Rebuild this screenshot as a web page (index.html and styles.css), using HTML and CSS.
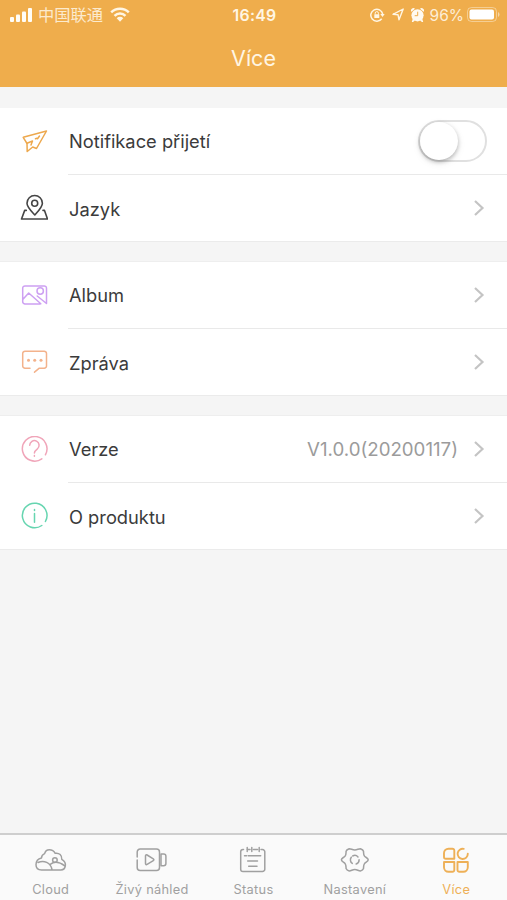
FILE: index.html
```html
<!DOCTYPE html>
<html lang="cs">
<head>
<meta charset="utf-8">
<meta name="viewport" content="width=device-width, initial-scale=1">
<title>Více</title>
<link rel="stylesheet" href="styles.css">
</head>
<body>
<div class="screen">
  <header class="header">
    <div class="status">
      <div class="status-left">
        <svg class="signal" width="23" height="14" viewBox="0 0 23 14"><rect x="0" y="9" width="4" height="5" rx="1"/><rect x="6" y="6.5" width="4" height="7.5" rx="1"/><rect x="12" y="3.5" width="4" height="10.500" rx="1"/><rect x="18" y="0" width="4" height="14" rx="1"/></svg>
        <span class="carrier" lang="zh">中国联通</span>
        <svg class="wifi" width="20" height="15" viewBox="0 0 20 15"><path d="M1.200 5.300a12.500 12.500 0 0 1 17.600 0M4.500 8.800a7.800 7.800 0 0 1 11 0" fill="none" stroke="currentColor" stroke-width="2.500"/><path d="M6.700 11.200a4.700 4.700 0 0 1 6.600 0L10 14.700z"/></svg>
      </div>
      <time class="clock">16:49</time>
      <div class="status-right">
        <svg class="lock" width="15" height="14" viewBox="0 0 15 14" fill="none" stroke="currentColor"><path d="M11.700 10.700A6 6 0 1 1 12.700 6" stroke-width="1.500"/><path d="M10.300 6h4.400l-2.200 3z" fill="currentColor" stroke="none"/><path d="M5.200 6.500V5.200a1.600 1.600 0 0 1 3.200 0v1.300"/><rect x="4.300" y="6.200" width="5" height="3.800" rx=".5" fill="currentColor" stroke="none"/></svg>
        <svg class="arrow" width="12" height="13" viewBox="0 0 12 13"><path d="M1 6.300 11.200 1 7 11.800 6 6.700z" fill="none" stroke="currentColor" stroke-width="1.400" stroke-linejoin="round"/></svg>
        <svg class="alarm" width="13" height="14" viewBox="0 0 13 14"><circle cx="6.500" cy="7.300" r="6.100"/><path d="M.4 3.800A2.400 2.400 0 0 1 4 .7zM9 .7a2.400 2.400 0 0 1 3.600 3.100zM1.800 10.500 4 12.500 2 14H.8zM11.200 10.500 9 12.500l2 1.500h1.200z"/><path d="M6.700 3.700v4H3.700" fill="none" stroke="#efad4c" stroke-width="1"/></svg>
        <span class="percent">96%</span>
        <svg class="battery" width="33" height="15" viewBox="0 0 33 15"><rect x=".5" y=".5" width="29" height="14" rx="4" fill="none" stroke="currentColor" opacity=".4"/><rect x="2.500" y="2.500" width="24.500" height="10" rx="2"/><path d="M31 5v5q1.500-.7 1.500-2.500T31 5z" opacity=".5"/></svg>
      </div>
    </div>
    <h1 class="title">Více</h1>
  </header>

  <main class="groups">
    <section class="group">
      <div class="row">
        <svg class="icon notify" viewBox="0 0 28 28"><path d="M7 15.500 3.200 9.300 26.500 3 16.500 20.500 12.700 19 7.200 23.500z"/><path d="M7 15.200 12.500 13 11 17M15.500 10.700l1.500-.5M19.500 8 17.500 10.700"/></svg>
        <div class="cell"><span class="label">Notifikace přijetí</span><button class="switch" role="switch" aria-checked="false" aria-label="Notifikace přijetí"><span class="knob"></span></button></div>
      </div>
      <div class="row">
        <svg class="icon language" viewBox="0 0 28 28"><path d="M14.800 21C10.500 16.200 7 12.900 7 9.200a7.700 7.700 0 0 1 15.400 0c0 3.700-3.300 7-7.600 11.800z"/><circle cx="14.700" cy="9.300" r="3"/><path d="M6.300 16.400H4.700L1.500 25h26L24.500 16.400H23"/></svg>
        <div class="cell"><span class="label">Jazyk</span><svg class="chevron" viewBox="0 0 12 18"><path d="m2 2 7.500 7L2 16"/></svg></div>
      </div>
    </section>

    <section class="group">
      <div class="row">
        <svg class="icon album" viewBox="0 0 28 28"><path d="M20 22H5a2.300 2.300 0 0 1-2.300-2.300V6.200A2.300 2.300 0 0 1 5 3.900h19.200a2.300 2.300 0 0 1 2.300 2.300V21.500L17.200 14M3 17.300 8.700 11 20.800 21.700"/><circle cx="20.200" cy="9" r="3.200"/></svg>
        <div class="cell"><span class="label">Album</span><svg class="chevron" viewBox="0 0 12 18"><path d="m2 2 7.500 7L2 16"/></svg></div>
      </div>
      <div class="row">
        <svg class="icon message" viewBox="0 0 28 28"><path d="M10 20.200H5a2.300 2.300 0 0 1-2.300-2.300V5.500A2.300 2.300 0 0 1 5 3.200h19.200a2.300 2.300 0 0 1 2.300 2.300v12.400a2.300 2.300 0 0 1-2.300 2.300h-4.900l-4.800 4"/><g fill="currentColor" stroke="none"><circle cx="8.500" cy="12.300" r="1.500"/><circle cx="14.700" cy="12.300" r="1.500"/><circle cx="21" cy="12.300" r="1.500"/></g></svg>
        <div class="cell"><span class="label">Zpráva</span><svg class="chevron" viewBox="0 0 12 18"><path d="m2 2 7.500 7L2 16"/></svg></div>
      </div>
    </section>

    <section class="group">
      <div class="row">
        <svg class="icon version" viewBox="0 0 28 28"><path d="M21.800 22.800A12.300 12.300 0 1 1 25.400 18.800"/><path d="M9.700 9.300a4.700 4.700 0 1 1 7.500 3.800c-2.100 1.500-2.800 2-2.800 4M14.400 19.500v.8"/></svg>
        <div class="cell"><span class="label">Verze</span><span class="value">V1.0.0(20200117)</span><svg class="chevron" viewBox="0 0 12 18"><path d="m2 2 7.500 7L2 16"/></svg></div>
      </div>
      <div class="row">
        <svg class="icon about" viewBox="0 0 28 28"><path d="M21.800 23.500A12.300 12.300 0 1 1 25.400 19.500M14.500 11.500v8.800M14.500 7.500v1"/></svg>
        <div class="cell"><span class="label">O produktu</span><svg class="chevron" viewBox="0 0 12 18"><path d="m2 2 7.500 7L2 16"/></svg></div>
      </div>
    </section>
  </main>

  <nav class="tabs">
    <a class="tab cloud"><svg viewBox="0 0 32 28"><path d="M6.500 11.900C6.500 9.500 8 8.300 9.600 7.600 10.300 5 12 3.700 14.300 3.700c3 0 4.700 1.300 5.900 3.600 4.200-.6 6.800 1.900 6.600 6.100 3 1.800 4 4 3.500 6.600-.5 2.500-2 3.900-4.300 3.900H6.500C3 23.900 1 21.800 1 18.700c0-3.700 2-6 5.500-6.800M3 16.500c6-2.500 12.500 0 14 7M15.200 18.300c4-3 9.500-2.300 14.500 1.500"/><circle cx="19.900" cy="14" r="2.300"/></svg><span>Cloud</span></a>
    <a class="tab live"><svg viewBox="0 0 32 28"><path d="M1.200 11V6a3 3 0 0 1 3-3h16.300a3 3 0 0 1 3 3v15.500a3 3 0 0 1-3 3H4.200a3 3 0 0 1-3-3V14"/><path d="M9.500 10v7.500c0 1 .8 1.400 1.600.9l6.200-3.700c.8-.5.800-1.300 0-1.800L11.100 9c-.8-.5-1.600 0-1.600 1zM25 8h2.700a2.200 2.200 0 0 1 2.200 2.200v7.300a2.200 2.200 0 0 1-2.200 2.200H25V8"/></svg><span>Živý náhled</span></a>
    <a class="tab stat"><svg viewBox="0 0 32 28"><path d="M6.500 3.500H6A2.300 2.300 0 0 0 3.700 5.800v17.400A2.300 2.300 0 0 0 6 25.500h19.500a2.300 2.300 0 0 0 2.300-2.300V5.800a2.300 2.300 0 0 0-2.300-2.300H24M10 3.500h3M16.500 3.500h4M10.200 1.500v4M14.800 1.500v4M22.200 1.500v4M7.500 9.700h2M11.200 9.700h12.500M10.700 15h9.800M11.700 20.200h8.300"/></svg><span>Status</span></a>
    <a class="tab settings"><svg viewBox="0 0 32 28"><path d="M10.200 2.700c2.200 0 2.900 1.300 5.600 1.300s3.400-1.300 5.600-1.300c1.600.6 2.800 1.300 3.100 2.500.2 2-.2 3.200 1 4.900 1.100 1.500 3.700 1.800 3.700 3.700s-2.600 2.300-3.700 3.800c-1.200 1.700-.8 3-1 5-.4 1.200-1.600 2-3.100 2.300-2.200 0-3-1.500-5.600-1.500s-3.400 1.500-5.600 1.500c-1.500-.3-2.700-1.100-3.100-2.300-.2-2 .2-3.300-1-5-1.100-1.500-3.700-1.900-3.700-3.800s2.600-2.200 3.700-3.700c1.200-1.700.8-2.900 1-4.900.3-1.200 1.500-1.900 3.100-2.500z"/><path d="M12.300 11.200a4.300 4.300 0 0 0 1 6.200M17.200 18a4.300 4.300 0 0 0 2.900-4.200M19 10.900a4.300 4.300 0 0 0-5.300-.9"/></svg><span>Nastavení</span></a>
    <a class="tab more active"><svg viewBox="0 0 32 28"><path d="M8.500 2.700h4a1.800 1.800 0 0 1 1.800 1.800v8.300H5.800A1.800 1.800 0 0 1 4 11V7.200a4.500 4.500 0 0 1 4.500-4.500zM4 16h10.300v8a1.800 1.800 0 0 1-1.800 1.800h-4A4.500 4.500 0 0 1 4 21.300zM17.500 16h10.300v5.300a4.500 4.500 0 0 1-4.500 4.500h-4a1.800 1.800 0 0 1-1.800-1.800zM27.800 7.800a5.100 5.100 0 1 1-4-4.900"/></svg><span>Více</span></a>
  </nav>
</div>
</body>
</html>
```
FILE: styles.css
```css
* { box-sizing: border-box; }
body {
  margin: 0;
  background: #f5f5f5;
  color: #3b3b3b;
  font-family: Inter, "Noto Sans CJK SC", sans-serif;
}
.screen { display: flex; flex-direction: column; height: 900px; }
.header { height: 87px; background: #efad4c; color: #fff6e4; }
.status {
  display: grid;
  grid-template-columns: 1fr auto 1fr;
  align-items: center;
  height: 29px;
  padding: 0 8px 0 10px;
}
.status svg { fill: currentColor; }
.status-left, .status-right { display: flex; align-items: center; }
.status-right { justify-content: flex-end; }
.status .lock, .status .arrow { fill: none; }
.signal { color: #fffdf7; }
.carrier { margin: 0 7px 0 5px; font-size: 16.300px; line-height: 20px; font-weight: 400; opacity: .85; }
.clock { padding-top: 1px; font-size: 15.800px; font-weight: 600; letter-spacing: .3px; }
.arrow { margin-left: 7px; }
.alarm { margin-left: 7px; color: #fffaf0; }
.percent { margin: 1px 3px 0 6px; font-size: 15.500px; opacity: .9; }
.battery { margin-right: -1px; color: #fff; }
.title { margin: 14px 0 0; font-size: 21.500px; line-height: 30px; font-weight: 400; text-align: center; }

.groups { flex: 1; padding-top: 21px; }
.group { height: 134px; margin-bottom: 20px; border-bottom: 1px solid #ebebeb; background: #fff; }
.group + .group { border-top: 1px solid #eeeeee; margin-top: -1px; height: 135px; }
.row { display: flex; align-items: center; height: 67px; padding-left: 20px; }
.row + .row { height: 66px; }
.icon { width: 28px; height: 28px; margin-right: 20px; flex: none; }
.icon, .chevron, .tab svg { fill: none; stroke: currentColor; stroke-width: 1.500; stroke-linecap: round; stroke-linejoin: round; }
.cell { display: flex; align-items: center; flex: 1; height: 100%; padding-right: 22px; padding-left: 1px; }
.row:first-child .cell { padding-right: 20px; border-bottom: 1px solid #e9e9e9; }
.row:first-child .chevron { margin-right: 2px; }
.label { flex: 1; font-size: 18.300px; }
.row + .row .label { padding-top: 1px; }
.value { margin-right: 15px; color: #9b9b9b; font-size: 18.700px; }
.chevron { width: 12px; height: 18px; color: #c4c4c4; stroke-width: 2.200; stroke-linecap: butt; stroke-linejoin: miter; }
.notify { color: #eda84d; }
.language { color: #454545; stroke-width: 1.600; }
.album { color: #cda0f2; }
.message { color: #f3b28b; }
.version { color: #f0a5b9; }
.about { color: #66d5b0; }
.switch { display: flex; width: 69px; height: 42px; padding: 0; border: 2px solid #e0e0e0; border-radius: 21px; background: #fff; }
.knob { width: 38px; height: 38px; border-radius: 50%; background: #fff; box-shadow: 0 2px 4px #0004, 0 3px 10px #0001; }

.tabs { display: grid; grid-template-columns: repeat(5, 1fr); height: 67px; border-top: 2px solid #cecece; background: #fafafa; color: #a0a0a0; }
.tab { display: flex; flex-direction: column; align-items: center; padding-top: 11px; font-size: 12.800px; line-height: 16px; letter-spacing: .3px; white-space: nowrap; }
.tab svg { width: 32px; height: 28px; margin-bottom: 8px; stroke-width: 1.500; }
.active { color: #eeb057; }
.active svg { stroke-width: 1.900; }
```
